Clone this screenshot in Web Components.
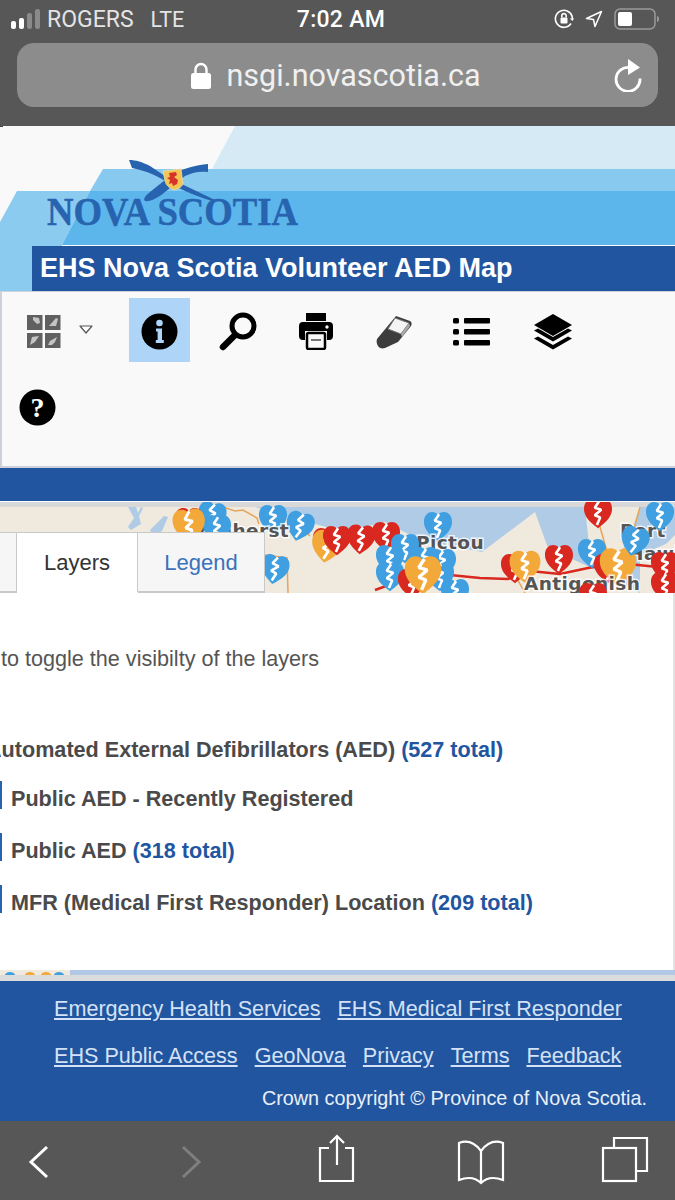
<!DOCTYPE html>
<html lang="en">
<head>
<meta charset="utf-8">
<title>EHS Nova Scotia Volunteer AED Map</title>
<style>
  html, body { margin: 0; padding: 0; background: #fff; }
  body { width: 675px; height: 1200px; overflow: hidden; font-family: "Liberation Sans", Arial, sans-serif; }
  layer-panel b { color: #22559f; }
</style>
</head>
<body>
<phone-chrome>
  <span slot="carrier">ROGERS</span>
  <span slot="net">LTE</span>
  <span slot="time">7:02 AM</span>
  <span slot="url">nsgi.novascotia.ca</span>
</phone-chrome>
<nova-banner>EHS Nova Scotia Volunteer AED Map</nova-banner>
<tool-bar></tool-bar>
<blue-band></blue-band>
<map-strip>
  <layer-tabs></layer-tabs>
</map-strip>
<layer-panel>
  <p slot="hint">to toggle the visibilty of the layers</p>
  <span slot="title">Automated External Defibrillators (AED) <b>(527 total)</b></span>
  <layer-row>Public AED - Recently Registered</layer-row>
  <layer-row>Public AED <b>(318 total)</b></layer-row>
  <layer-row>MFR (Medical First Responder) Location <b>(209 total)</b></layer-row>
</layer-panel>
<map-sliver></map-sliver>
<site-footer></site-footer>
<safari-bar></safari-bar>

<script>
class PhoneChrome extends HTMLElement {
  constructor() {
    super();
    this.shadowDOM = this.attachShadow({ mode: 'open' });
    this.shadowDOM.innerHTML = `
      <style>
        :host { display: block; height: 126px; background: #575757; color: #fff; font-family: Roboto, "Liberation Sans", sans-serif; }
        .status { display: grid; grid-template-columns: 1fr auto 1fr; align-items: center; height: 38px; padding: 0 14px 0 11px; font-size: 23px; }
        .left { display: flex; align-items: center; color: #e4e4e4; }
        .left svg { margin-right: 7px; }
        .net { margin-left: 17px; font-size: 21.500px; }
        .time { font-size: 23px; font-weight: 500; letter-spacing: .3px; margin-left: 10px; }
        .right { display: flex; justify-content: flex-end; align-items: center; gap: 11px; }
        .url { display: flex; align-items: center; justify-content: center; position: relative; height: 64px; margin: 5px 17px 0; border-radius: 17px; background: #8c8c8c; font-size: 30.500px; font-weight: 400; color: #f0f0f0; }
        .url svg.lock { margin: 0 15px 0 -3px; }
        .url svg.reload { position: absolute; right: 15px; top: 15px; }
      </style>
      <div class="status">
        <div class="left">
          <svg width="29" height="24" viewBox="0 0 29 24">
            <rect x="0" y="14" width="5" height="8" rx="2" fill="#fff"/>
            <rect x="8" y="11" width="5" height="11" rx="2" fill="#fff"/>
            <rect x="16" y="6" width="5" height="16" rx="2" fill="#8a8a8a"/>
            <rect x="24" y="2" width="5" height="20" rx="2" fill="#8a8a8a"/>
          </svg>
          <slot name="carrier"></slot><span class="net"><slot name="net"></slot></span>
        </div>
        <div class="time"><slot name="time"></slot></div>
        <div class="right">
          <svg width="20" height="22" viewBox="0 0 20 22" fill="none" stroke="#fff" stroke-width="1.6">
            <path d="M17 15.5A8.5 8.5 0 1 1 18.4 11"/>
            <path d="M15.8 10.5l2.6 2.6 1.6-2.6z" fill="#fff" stroke="none"/>
            <rect x="6.5" y="9.5" width="7" height="6" rx="1" fill="#fff" stroke="none"/>
            <path d="M7.8 9.5V7.8a2.2 2.2 0 0 1 4.4 0v1.7"/>
          </svg>
          <svg width="18" height="18" viewBox="0 0 18 18" fill="none" stroke="#fff" stroke-width="1.5" stroke-linejoin="round">
            <path d="M1.5 8.5L16.5 1.5 10 16.5 8.5 9.5z"/>
          </svg>
          <svg width="47" height="22" viewBox="0 0 47 22" fill="none">
            <rect x="1" y="1" width="40" height="20" rx="5" stroke="#9a9a9a" stroke-width="1.5"/>
            <rect x="4" y="4" width="14" height="14" rx="2" fill="#fff"/>
            <path d="M43 8c1.600.5 2 1.500 2 3s-.4 2.500-2 3z" fill="#9a9a9a"/>
          </svg>
        </div>
      </div>
      <div class="url">
        <svg class="lock" width="20" height="27" viewBox="0 0 20 27">
          <path d="M4.500 12V7.500a5.500 5.500 0 0 1 11 0V12" fill="none" stroke="#fff" stroke-width="2.400"/>
          <rect x="0" y="11" width="20" height="16" rx="2.500" fill="#fff"/>
        </svg>
        <slot name="url"></slot>
        <svg class="reload" width="30" height="34" viewBox="0 0 30 34" fill="none">
          <path d="M17 9.500A12 12 0 1 0 27 20.500" stroke="#fff" stroke-width="2.800"/>
          <path d="M15 1l12 8.500L15 17z" fill="#fff"/>
        </svg>
      </div>
    `;
  }
}
customElements.define('phone-chrome', PhoneChrome);

class NovaBanner extends HTMLElement {
  constructor() {
    super();
    this.shadowDOM = this.attachShadow({ mode: 'open' });
    this.shadowDOM.innerHTML = `
      <style>
        :host { display: grid; height: 165px; background: #f9f9f9; }
        svg { grid-area: 1 / 1; display: block; }
        .title { grid-area: 1 / 1; align-self: end; margin-left: 32px; height: 45px; line-height: 45px; padding-left: 8px; background: #22559f; color: #fff; font-size: 27px; font-weight: 700; white-space: nowrap; }
      </style>
      <svg width="675" height="165" viewBox="0 126 675 165">
        <rect x="0" y="126" width="3" height="1" fill="#444"/>
        <polygon points="235,126 675,126 675,169 212,169" fill="#d5eaf5"/>
        <polygon points="103,169 675,169 675,191 90,191" fill="#88c9ef"/>
        <polygon points="17,191 90,191 62,245 62,291 0,291 0,222" fill="#8ccbf0"/>
        <polygon points="90,191 675,191 675,245 62,245" fill="#5cb6ec"/>
        <path d="M129 160C136 160 142 162 150 166L165 176 190 188 215 200 212 201C195 196 175 187 160 178 150 172 140 170 132 168Z" fill="#2763ae"/>
        <path d="M208 164L208 172C200 171 193 172 185 176L165 192C158 198 150 202 145 201 143 199 145 196 150 192L170 176C183 168 196 165 208 164Z" fill="#2763ae"/>
        <path d="M163 171l18-2 2 15c-2 4-6 5-9 6-5-2-8-5-9-9z" fill="#f3c554" stroke="#e6dfb0" stroke-width=".8"/>
        <path d="M169 173l7-1 1 3-3 2 4 3-1 4-4 2-1-3-3 1 1-4-3-2 3-1z" fill="#d8332a"/>
        <text x="47" y="225" textLength="251" lengthAdjust="spacingAndGlyphs" font-family="'Liberation Serif', 'Times New Roman', serif" font-weight="700" font-size="40" fill="#2763ae" stroke="#2763ae" stroke-width=".5">NOVA SCOTIA</text>
      </svg>
      <div class="title"><slot></slot></div>
    `;
  }
}
customElements.define('nova-banner', NovaBanner);

class ToolBar extends HTMLElement {
  constructor() {
    super();
    this.shadowDOM = this.attachShadow({ mode: 'open' });
    this.shadowDOM.innerHTML = `
      <style>
        :host { display: flex; flex-wrap: wrap; box-sizing: border-box; height: 177px; align-content: flex-start; gap: 12px 17px; padding: 6px 26px 0 6px; background: #f9f9f9; border: 2px solid #cdd1d9; border-width: 1px 0 2px 2px; }
        .tool { display: flex; align-items: center; justify-content: center; box-sizing: border-box; width: 61px; height: 64px; padding-top: 3px; }
        .tool.active { background: #aed5f7; }
        .drop { display: flex; align-items: center; width: 104px; height: 64px; padding: 3px 0 0 19px; box-sizing: border-box; }
        .drop svg + svg { margin: -4px 0 0 18px; }
      </style>
      <div class="drop">
        <svg width="34" height="33" viewBox="0 0 34 33">
          <g fill="#606060">
            <rect x="0" y="0" width="15.500" height="15"/><rect x="18" y="0" width="15.500" height="15"/>
            <rect x="0" y="18" width="15.500" height="15"/><rect x="18" y="18" width="15.500" height="15"/>
          </g>
          <g fill="#c4c4c4">
            <path d="M6 2l6 1 1 5-3 1-4-4z"/><path d="M22 11l7-8 2 1-2 7z"/>
            <path d="M3 30l2-8 7-1-4 6z"/><path d="M21 30l2-4 7-4-2 5-3 3z"/>
          </g>
        </svg>
        <svg width="14" height="9" viewBox="0 0 14 9"><path d="M1 1h12L7 8z" fill="#fff" stroke="#555" stroke-width="1.200" stroke-linejoin="round"/></svg>
      </div>
      <div class="tool active">
        <svg width="37" height="37" viewBox="0 0 37 37">
          <circle cx="18.500" cy="18.500" r="18" fill="#000"/>
          <circle cx="18.500" cy="10" r="3.300" fill="#aed5f7"/>
          <path d="M15 15.500h6v11.500h1.800v3h-8v-3h1.800v-8.500h-1.600z" fill="#aed5f7"/>
        </svg>
      </div>
      <div class="tool">
        <svg width="38" height="39" viewBox="0 0 38 39" fill="none" stroke="#000">
          <circle cx="24" cy="14" r="11" stroke-width="5"/>
          <path d="M15 24L4 35" stroke-width="6.500" stroke-linecap="round"/>
        </svg>
      </div>
      <div class="tool">
        <svg width="34" height="37" viewBox="0 0 34 37">
          <path d="M7 0h20v8H7z" fill="#000"/>
          <path d="M4 9h26a4 4 0 0 1 4 4v10a4 4 0 0 1-4 4h-2V18H6v9H4a4 4 0 0 1-4-4V13a4 4 0 0 1 4-4z" fill="#000"/>
          <circle cx="28" cy="14" r="1.700" fill="#f9f9f9"/>
          <rect x="8" y="20" width="18" height="16" rx="1.500" fill="#f9f9f9" stroke="#000" stroke-width="2.500"/>
          <path d="M12 27h10" stroke="#777" stroke-width="2"/>
        </svg>
      </div>
      <div class="tool">
        <svg width="36" height="34" viewBox="0 0 36 34">
          <path d="M20 1l14 5c2 1 2 3 1 5L22 27 9 33c-3 1-6 0-7-2s-2-4-1-7z" fill="#3d3d3d"/>
          <path d="M19 3l14 5-8 11-13-5z" fill="#f4f4f4" stroke="#777" stroke-width="1"/>
          <path d="M25 19l8-11 1 3-8 11z" fill="#aaa"/>
        </svg>
      </div>
      <div class="tool">
        <svg width="37" height="30" viewBox="0 0 37 30" fill="#000">
          <rect x="0" y="1" width="6" height="5.500" rx="1.500"/><rect x="11" y="1" width="26" height="5.500" rx="1"/>
          <rect x="0" y="12" width="6" height="5.500" rx="1.500"/><rect x="11" y="12" width="26" height="5.500" rx="1"/>
          <rect x="0" y="23" width="6" height="5.500" rx="1.500"/><rect x="11" y="23" width="26" height="5.500" rx="1"/>
        </svg>
      </div>
      <div class="tool" style="margin-left:3px">
        <svg width="38" height="36" viewBox="0 0 38 36" fill="#000">
          <path d="M19 0l19 11-19 11L0 11z"/>
          <path d="M0 16.500l4-2 15 8.500 15-8.500 4 2-19 11z"/>
          <path d="M0 24.500l4-2 15 8.500 15-8.500 4 2-19 11z"/>
        </svg>
      </div>
      <div class="tool">
        <svg width="37" height="37" viewBox="0 0 37 37" style="margin-left:-2px">
          <circle cx="18.500" cy="18.500" r="18" fill="#000"/>
          <text x="18.500" y="28" text-anchor="middle" font-family="'Liberation Serif', serif" font-weight="700" font-size="28" fill="#fff">?</text>
        </svg>
      </div>
    `;
  }
}
customElements.define('tool-bar', ToolBar);

class BlueBand extends HTMLElement {
  constructor() {
    super();
    this.attachShadow({ mode: 'open' }).innerHTML = `
      <style>:host { display: block; height: 33px; background: #22559f; }</style>
    `;
  }
}
customElements.define('blue-band', BlueBand);

// one broken heart marker, cx/cy are page coordinates
const PIN_COLOURS = { b: '#3f9fe0', r: '#d9281f', o: '#f2a93a' };
function pin(cx, cy, kind, rot = 0, scale = 1) {
  return `<g transform="translate(${cx} ${cy}) rotate(${rot}) scale(${scale * 1.08})">
    <path d="M0 15C-8 9-13 4-13-3-13-9-9-12-5.500-12-3-12-1-11 0-9 1-11 3-12 5.500-12 9-12 13-9 13-3 13 4 8 9 0 15Z" fill="${PIN_COLOURS[kind]}"/>
    <path d="M1-10L-3-4 3-2-3 3 2 5-1 12" fill="none" stroke="#fff" stroke-width="2.400" stroke-linejoin="bevel"/>
  </g>`;
}

class MapStrip extends HTMLElement {
  constructor() {
    super();
    this.shadowDOM = this.attachShadow({ mode: 'open' });
    const under = [
      [273, 518, 'b', 0], [300, 525, 'b', 15], [275, 568, 'b', 10],
      [327, 541, 'r', 0], [327, 545, 'o', 10, 1.100],
      [337, 539, 'r', 0], [361, 538, 'r', 5], [386, 535, 'r', 0],
      [438, 525, 'b', 0],
    ];
    const overAmherst = [[212, 515, 'b', 10], [217, 528, 'b', 0], [189, 521, 'r', 0], [189, 524, 'o', -5, 1.150]];
    const over = [
      [405, 547, 'b', 0], [390, 558, 'b', 0], [390, 575, 'b', 0], [442, 562, 'b', 0], [440, 575, 'b', 0],
      [455, 592, 'b', 0], [425, 560, 'b', 0], [412, 582, 'r', 0], [423, 573, 'o', 0, 1.300],
      [515, 567, 'r', 0], [525, 565, 'o', 0, 1.100], [559, 558, 'r', 0], [592, 552, 'b', 0],
      [608, 567, 'r', 0], [618, 565, 'o', 0, 1.300], [598, 512, 'r', 0], [660, 515, 'b', 0],
      [635, 540, 'b', 15], [665, 565, 'r', 0], [665, 585, 'r', 0],
    ];
    const label = (x, y, text) => `<text x="${x}" y="${y}" font-family="'DejaVu Sans', sans-serif" font-weight="700" font-size="18.500" letter-spacing=".4" fill="#555" stroke="#fff" stroke-opacity=".8" stroke-width="3" paint-order="stroke">${text}</text>`;
    this.shadowDOM.innerHTML = `
      <style>
        :host { display: block; position: relative; height: 92px; overflow: hidden; background: #dedede; border-top: 1px solid #fff; box-sizing: border-box; }
        svg { display: block; }
        .tabs { position: absolute; left: 0; bottom: 0; }
      </style>
      <svg width="675" height="91" viewBox="0 502 675 91">
        <rect x="0" y="502" width="675" height="91" fill="#efe9de"/>
        <rect x="0" y="502" width="675" height="5" fill="#d8d8d8"/>
        <path d="M255 507H675V535L650 560H675V593H640L600 572 585 565 548 548 535 512 482 552 420 540 385 522 345 532 300 520 255 507Z" fill="#afcbe5"/>
        <path d="M585 507L640 507 632 530 618 560 590 555Z" fill="#efe9de"/>
        <path d="M640 555L675 540V593H640Z" fill="#efe9de"/>
        <path d="M128 507h8l2 6 3-6 2 1-4 8 2 8-10 6-3-3 6-9zM150 530l14-14 4 1-6 14-9 5z" fill="#afcbe5"/>
        <path d="M223 507l12 4 8-1 14 8 2 6M265 555l22 3 1 35M304 530l6 6" fill="none" stroke="#e8a45a" stroke-width="1.500"/>
        <path d="M450 575l30 3 28 1 22-8 30 3 28-6 30-5 40 4M375 590l28-10" fill="none" stroke="#d9281f" stroke-width="2.500"/>
        <path d="M598 520l12 42M640 507l-14 50M515 575l10 18" fill="none" stroke="#e8a45a" stroke-width="1.500"/>
        ${under.map(p => pin(...p)).join('')}
        ${label(198, 537, 'Amherst')}
        ${overAmherst.map(p => pin(...p)).join('')}
        ${label(416, 549, 'Pictou')}
        ${label(620, 537, 'Port')}
        ${label(628, 560, 'Hawk')}
        ${over.map(p => pin(...p)).join('')}
        ${label(524, 590, 'Antigonish')}
        ${pin(593, 596, 'r')}
      </svg>
      <div class="tabs"><slot></slot></div>
    `;
  }
}
customElements.define('map-strip', MapStrip);

class LayerTabs extends HTMLElement {
  constructor() {
    super();
    this.shadowDOM = this.attachShadow({ mode: 'open' });
    this.shadowDOM.innerHTML = `
      <style>
        :host { display: flex; height: 61px; box-sizing: border-box; font-size: 22px; line-height: 60px; }
        div { box-sizing: border-box; height: 61px; text-align: center; border: 1px solid #c9c9c9; border-bottom-width: 2px; background: #f6f6f6; border-left: 0; }
        .stub { width: 17px; }
        .on { width: 121px; background: #fff; border-bottom-color: #fff; color: #333; }
        .legend { width: 127px; color: #3a72bc; }
      </style>
      <div class="stub"></div>
      <div class="on">Layers</div>
      <div class="legend">Legend</div>
    `;
  }
}
customElements.define('layer-tabs', LayerTabs);

class LayerPanel extends HTMLElement {
  constructor() {
    super();
    this.shadowDOM = this.attachShadow({ mode: 'open' });
    this.shadowDOM.innerHTML = `
      <style>
        :host { display: block; box-sizing: border-box; height: 377px; padding-top: 54px; background: #fff; border-right: 2px solid #e2e2e2; overflow: hidden; color: #4a4a4a; font-size: 21.600px; }
        ::slotted(p) { margin: 0 0 0 1px; line-height: 24px; color: #555; }
        .title { margin: 67px 0 0 -14px; font-weight: 700; line-height: 24px; white-space: nowrap; }
        .rows { display: flex; flex-direction: column; gap: 24px; margin-top: 19px; }
      </style>
      <slot name="hint"></slot>
      <div class="title"><slot name="title"></slot></div>
      <div class="rows"><slot></slot></div>
    `;
  }
}
customElements.define('layer-panel', LayerPanel);

class LayerRow extends HTMLElement {
  constructor() {
    super();
    this.shadowDOM = this.attachShadow({ mode: 'open' });
    this.shadowDOM.innerHTML = `
      <style>
        :host { display: block; height: 28px; line-height: 36px; padding-left: 9px; border-left: 2px solid #2763ae; font-weight: 700; white-space: nowrap; }
      </style>
      <slot></slot>
    `;
  }
}
customElements.define('layer-row', LayerRow);

class MapSliver extends HTMLElement {
  constructor() {
    super();
    this.attachShadow({ mode: 'open' }).innerHTML = `
      <style>
        :host { display: block; height: 11px; background: linear-gradient(#b1c9e4 0 5px, #dcdcdc 5px 100%); }
        svg { display: block; }
      </style>
      <svg width="70" height="5" viewBox="0 0 70 5">
        <rect width="70" height="5" fill="#efe9de"/>
        <ellipse cx="10" cy="5" rx="5" ry="3" fill="#3f9fe0"/>
        <ellipse cx="30" cy="5" rx="5" ry="3" fill="#f2a93a"/>
        <ellipse cx="46" cy="5" rx="5" ry="3" fill="#f2a93a"/>
        <ellipse cx="59" cy="5" rx="5" ry="3" fill="#3f9fe0"/>
      </svg>
    `;
  }
}
customElements.define('map-sliver', MapSliver);

class SiteFooter extends HTMLElement {
  constructor() {
    super();
    this.shadowDOM = this.attachShadow({ mode: 'open' });
    this.shadowDOM.innerHTML = `
      <style>
        :host { display: block; box-sizing: border-box; height: 140px; padding: 15px 28px 0 54px; background: #22559f; font-size: 21.600px; color: #e9eff8; }
        .links { display: flex; gap: 17px; height: 47px; line-height: 26px; white-space: nowrap; }
        a { color: #d3e2f6; text-decoration: underline; text-underline-offset: 2px; }
        .copy { text-align: right; line-height: 26px; font-size: 19.800px; margin-top: -5px; }
      </style>
      <div class="links"><a>Emergency Health Services</a><a>EHS Medical First Responder</a></div>
      <div class="links"><a>EHS Public Access</a><a>GeoNova</a><a>Privacy</a><a>Terms</a><a>Feedback</a></div>
      <div class="copy">Crown copyright © Province of Nova Scotia.</div>
    `;
  }
}
customElements.define('site-footer', SiteFooter);

class SafariBar extends HTMLElement {
  constructor() {
    super();
    this.shadowDOM = this.attachShadow({ mode: 'open' });
    this.shadowDOM.innerHTML = `
      <style>
        :host { display: block; height: 79px; background: #575757; }
        svg { display: block; }
      </style>
      <svg width="675" height="79" viewBox="0 1121 675 79" fill="none" stroke="#fff" stroke-width="2.200">
        <path d="M47 1147L31 1162 47 1177" stroke-width="3"/>
        <path d="M183 1147L199 1162 183 1177" stroke="#7f7f7f" stroke-width="3"/>
        <path d="M329 1148H320V1181H353V1148H345"/>
        <path d="M337 1165V1136M330 1143L337 1136 344 1143"/>
        <path d="M481 1151C475 1143 467 1140 459 1143V1180C467 1177 475 1177 481 1183 487 1177 495 1177 503 1180V1143C495 1140 487 1143 481 1151V1183"/>
        <rect x="603" y="1148" width="33" height="33"/>
        <path d="M614 1148V1138H647V1171H636"/>
      </svg>
    `;
  }
}
customElements.define('safari-bar', SafariBar);
</script>
</body>
</html>
